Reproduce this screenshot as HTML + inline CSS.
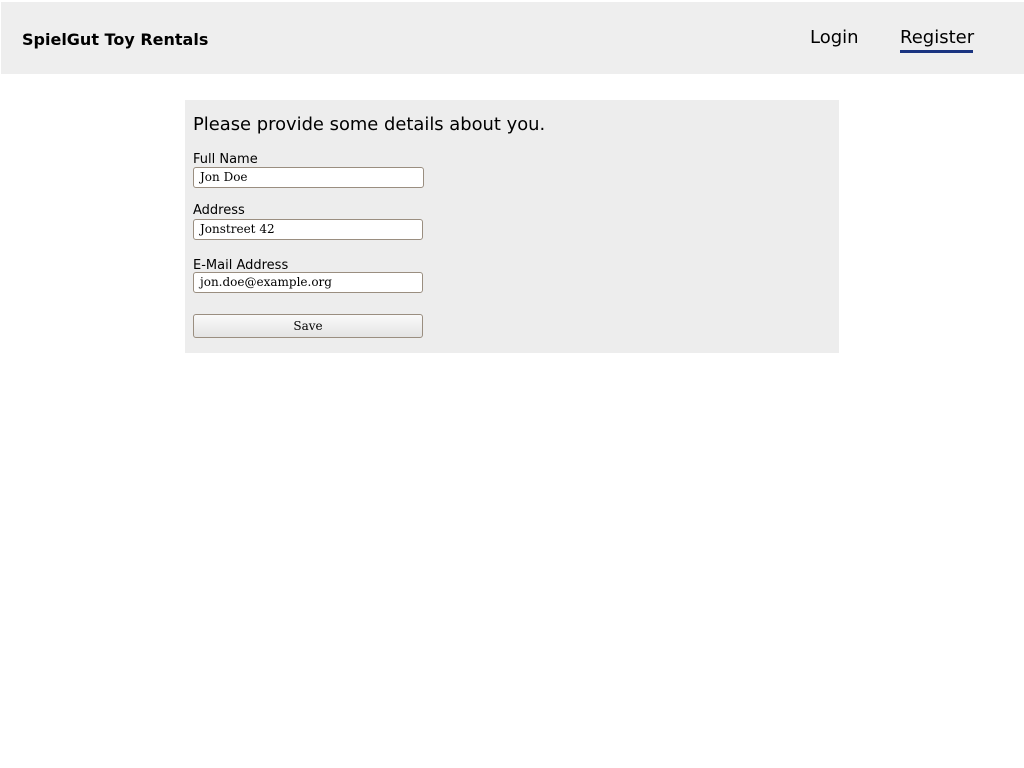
<!DOCTYPE html>
<html><head><style>
body{margin:0;background:#fff;font-family:"DejaVu Sans",sans-serif;color:#000;}
.hdr{position:absolute;left:1px;top:2px;width:1023px;height:72px;background:#eee;}
.brand{position:absolute;left:22px;top:30px;font-size:16px;font-weight:bold;}
.nav{position:absolute;top:27px;font-size:18px;}
.ul{position:absolute;left:900px;top:50px;width:73px;height:3px;background:#1a3480;}
.box{position:absolute;left:185px;top:100px;width:654px;height:253px;background:#ededed;}
.t{position:absolute;left:8px;top:14px;font-size:17.9px;}
.l{position:absolute;left:8px;font-size:13px;}
.in{position:absolute;left:8px;width:229px;height:21px;border:1px solid #9a8e80;border-radius:3px;background:#fff;box-sizing:border-box;font-family:"DejaVu Serif",serif;font-size:12px;padding-left:6px;line-height:19px;}
.btn{position:absolute;left:8px;top:214px;width:230px;height:24px;border:1px solid #9a8e80;border-radius:3px;box-sizing:border-box;background:linear-gradient(#fafafa,#e4e4e4);font-family:"DejaVu Serif",serif;font-size:12px;text-align:center;line-height:23px;}
</style></head><body>
<div class="hdr"></div>
<div class="brand">SpielGut Toy Rentals</div>
<div class="nav" style="left:810px">Login</div>
<div class="nav" style="left:900px">Register</div>
<div class="ul"></div>
<div class="box">
<div class="t">Please provide some details about you.</div>
<div class="l" style="top:52px">Full Name</div>
<div class="in" style="top:67px;width:231px">Jon Doe</div>
<div class="l" style="top:103px">Address</div>
<div class="in" style="top:119px;width:230px">Jonstreet 42</div>
<div class="l" style="top:158px">E-Mail Address</div>
<div class="in" style="top:172px;width:230px">jon.doe@example.org</div>
<div class="btn">Save</div>
</div>
</body></html>
